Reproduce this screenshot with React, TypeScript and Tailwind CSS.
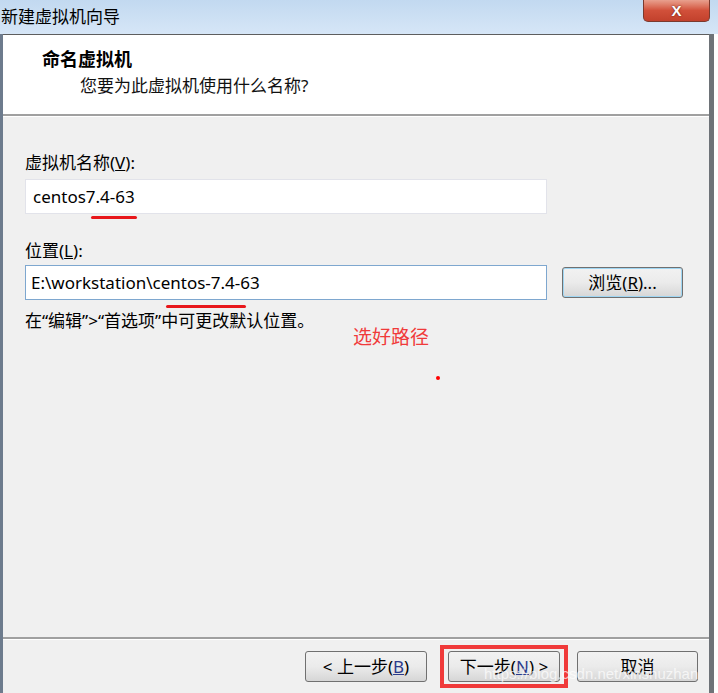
import React from 'react';

const font = { fontFamily: '"Noto Sans", "Noto Sans CJK SC", sans-serif' };

function Btn({ children, className = '' }: { children: React.ReactNode; className?: string }) {
  return (
    <div
      className={`flex items-center justify-center h-[31px] rounded-[3px] border border-[#707070] bg-gradient-to-b from-[#f2f2f2] via-[#ebebeb] to-[#d6d6d6] text-[16px] text-black ${className}`}
    >
      {children}
    </div>
  );
}

export default function App() {
  return (
    <div className="w-[718px] h-[693px] overflow-hidden bg-white relative" style={font}>
      {/* title bar */}
      <div className="h-[34px] flex items-start bg-gradient-to-b from-[#c2d9f0] to-[#d6e6f7] relative">
        <span className="text-[17px] leading-[34px] text-black pl-[1px]">新建虚拟机向导</span>
        <div className="absolute left-[643px] top-0 w-[67px] h-[22px] rounded-b-[5px] border border-[#7a3a2e] border-t-0 bg-gradient-to-b from-[#e8a08e] via-[#d1503a] to-[#c2412c] flex items-center justify-center">
          <span className="text-white font-bold text-[15px] leading-none" style={{ fontFamily: '"Liberation Sans", sans-serif', textShadow: '0 0 2px #5a1a10' }}>X</span>
        </div>
      </div>

      <div className="flex h-[659px]">
        {/* window body */}
        <div className="w-[714px] flex flex-col border-l-[3px] border-l-[#6d7b8d] border-r-[5px] border-r-[#6e7378] bg-[#f0f0f0]">
          {/* header */}
          <div className="h-[82px] bg-white border-t border-t-[#5e5e5e] border-b-2 border-b-[#a0a0a0] flex flex-col">
            <div className="pl-[39px] pt-[13px] text-[18px] font-bold leading-[22px] text-black">命名虚拟机</div>
            <div className="pl-[77px] pt-[5px] text-[17px] leading-[22px] text-[#111]">您要为此虚拟机使用什么名称?</div>
          </div>

          {/* body */}
          <div className="flex-1 flex flex-col pl-[22px] pt-[35px] text-[17px] text-black border-t border-t-white">
            <div className="leading-[22px]">虚拟机名称(<span className="underline">V</span>):</div>
            <div className="mt-[5px] w-[522px] h-[35px] bg-white border border-[#e2e3ea] flex items-center pl-[7px]">
              <span className="relative">
                centos7.4-63
                <span className="absolute left-[58px] top-[32px] w-[46px] h-[3px] bg-[#e8171b] rounded-full" />
              </span>
            </div>

            <div className="mt-[26px] leading-[22px]">位置(<span className="underline">L</span>):</div>
            <div className="mt-[3px] flex items-center">
              <div className="w-[522px] h-[35px] bg-white border border-[#7ea7cf] flex items-center pl-[5px] relative">
                E:\workstation\centos-7.4-63
                <span className="absolute left-[140px] top-[39px] w-[80px] h-[3px] bg-[#e8171b] rounded-full" />
              </div>
              <Btn className="ml-[15px] w-[121px] border-[#3c9ad6] shadow-[inset_0_0_0_1px_#9fd6f3] from-[#eef6fb] to-[#cfdfe8] text-[17px]">
                浏览(<span className="underline">R</span>)...
              </Btn>
            </div>
            <div className="mt-[10px] leading-[22px]">在“编辑”&gt;“首选项”中可更改默认位置。</div>
            <div className="pl-[328px] mt-[-7px] text-[#f03a3a] text-[19px] leading-[24px]">选好路径</div>
            <div className="ml-[411px] mt-[27px] w-[4px] h-[4px] rounded-full bg-[#f00]" />
          </div>

          {/* footer */}
          <div className="h-[56px] border-t-2 border-t-[#a0a0a0] flex items-start pt-[12px] pl-[302px] relative">
            <div className="absolute inset-x-0 top-0 h-px bg-white" />
            <Btn className="w-[122px] text-[17px]">&lt; 上一步(<span className="underline text-[#2b3a8a]">B</span>)</Btn>
            <div className="ml-[13px] mt-[-6px] w-[128px] h-[43px] border-[4px] border-[#f03a3a] flex items-center justify-center">
              <Btn className="w-[112px] text-[17px]">下一步(<span className="underline text-[#2b3a8a]">N</span>) &gt;</Btn>
            </div>
            <Btn className="ml-[9px] w-[121px] text-[17px]">取消</Btn>
            <span className="absolute left-[481px] top-[24px] text-[15px] text-white/70 whitespace-nowrap" style={{ fontFamily: '"Liberation Sans", sans-serif' }}>
              https://blog.csdn.net/xinshuzhan
            </span>
          </div>
        </div>
        <div className="flex-1 bg-white" />
      </div>
    </div>
  );
}
